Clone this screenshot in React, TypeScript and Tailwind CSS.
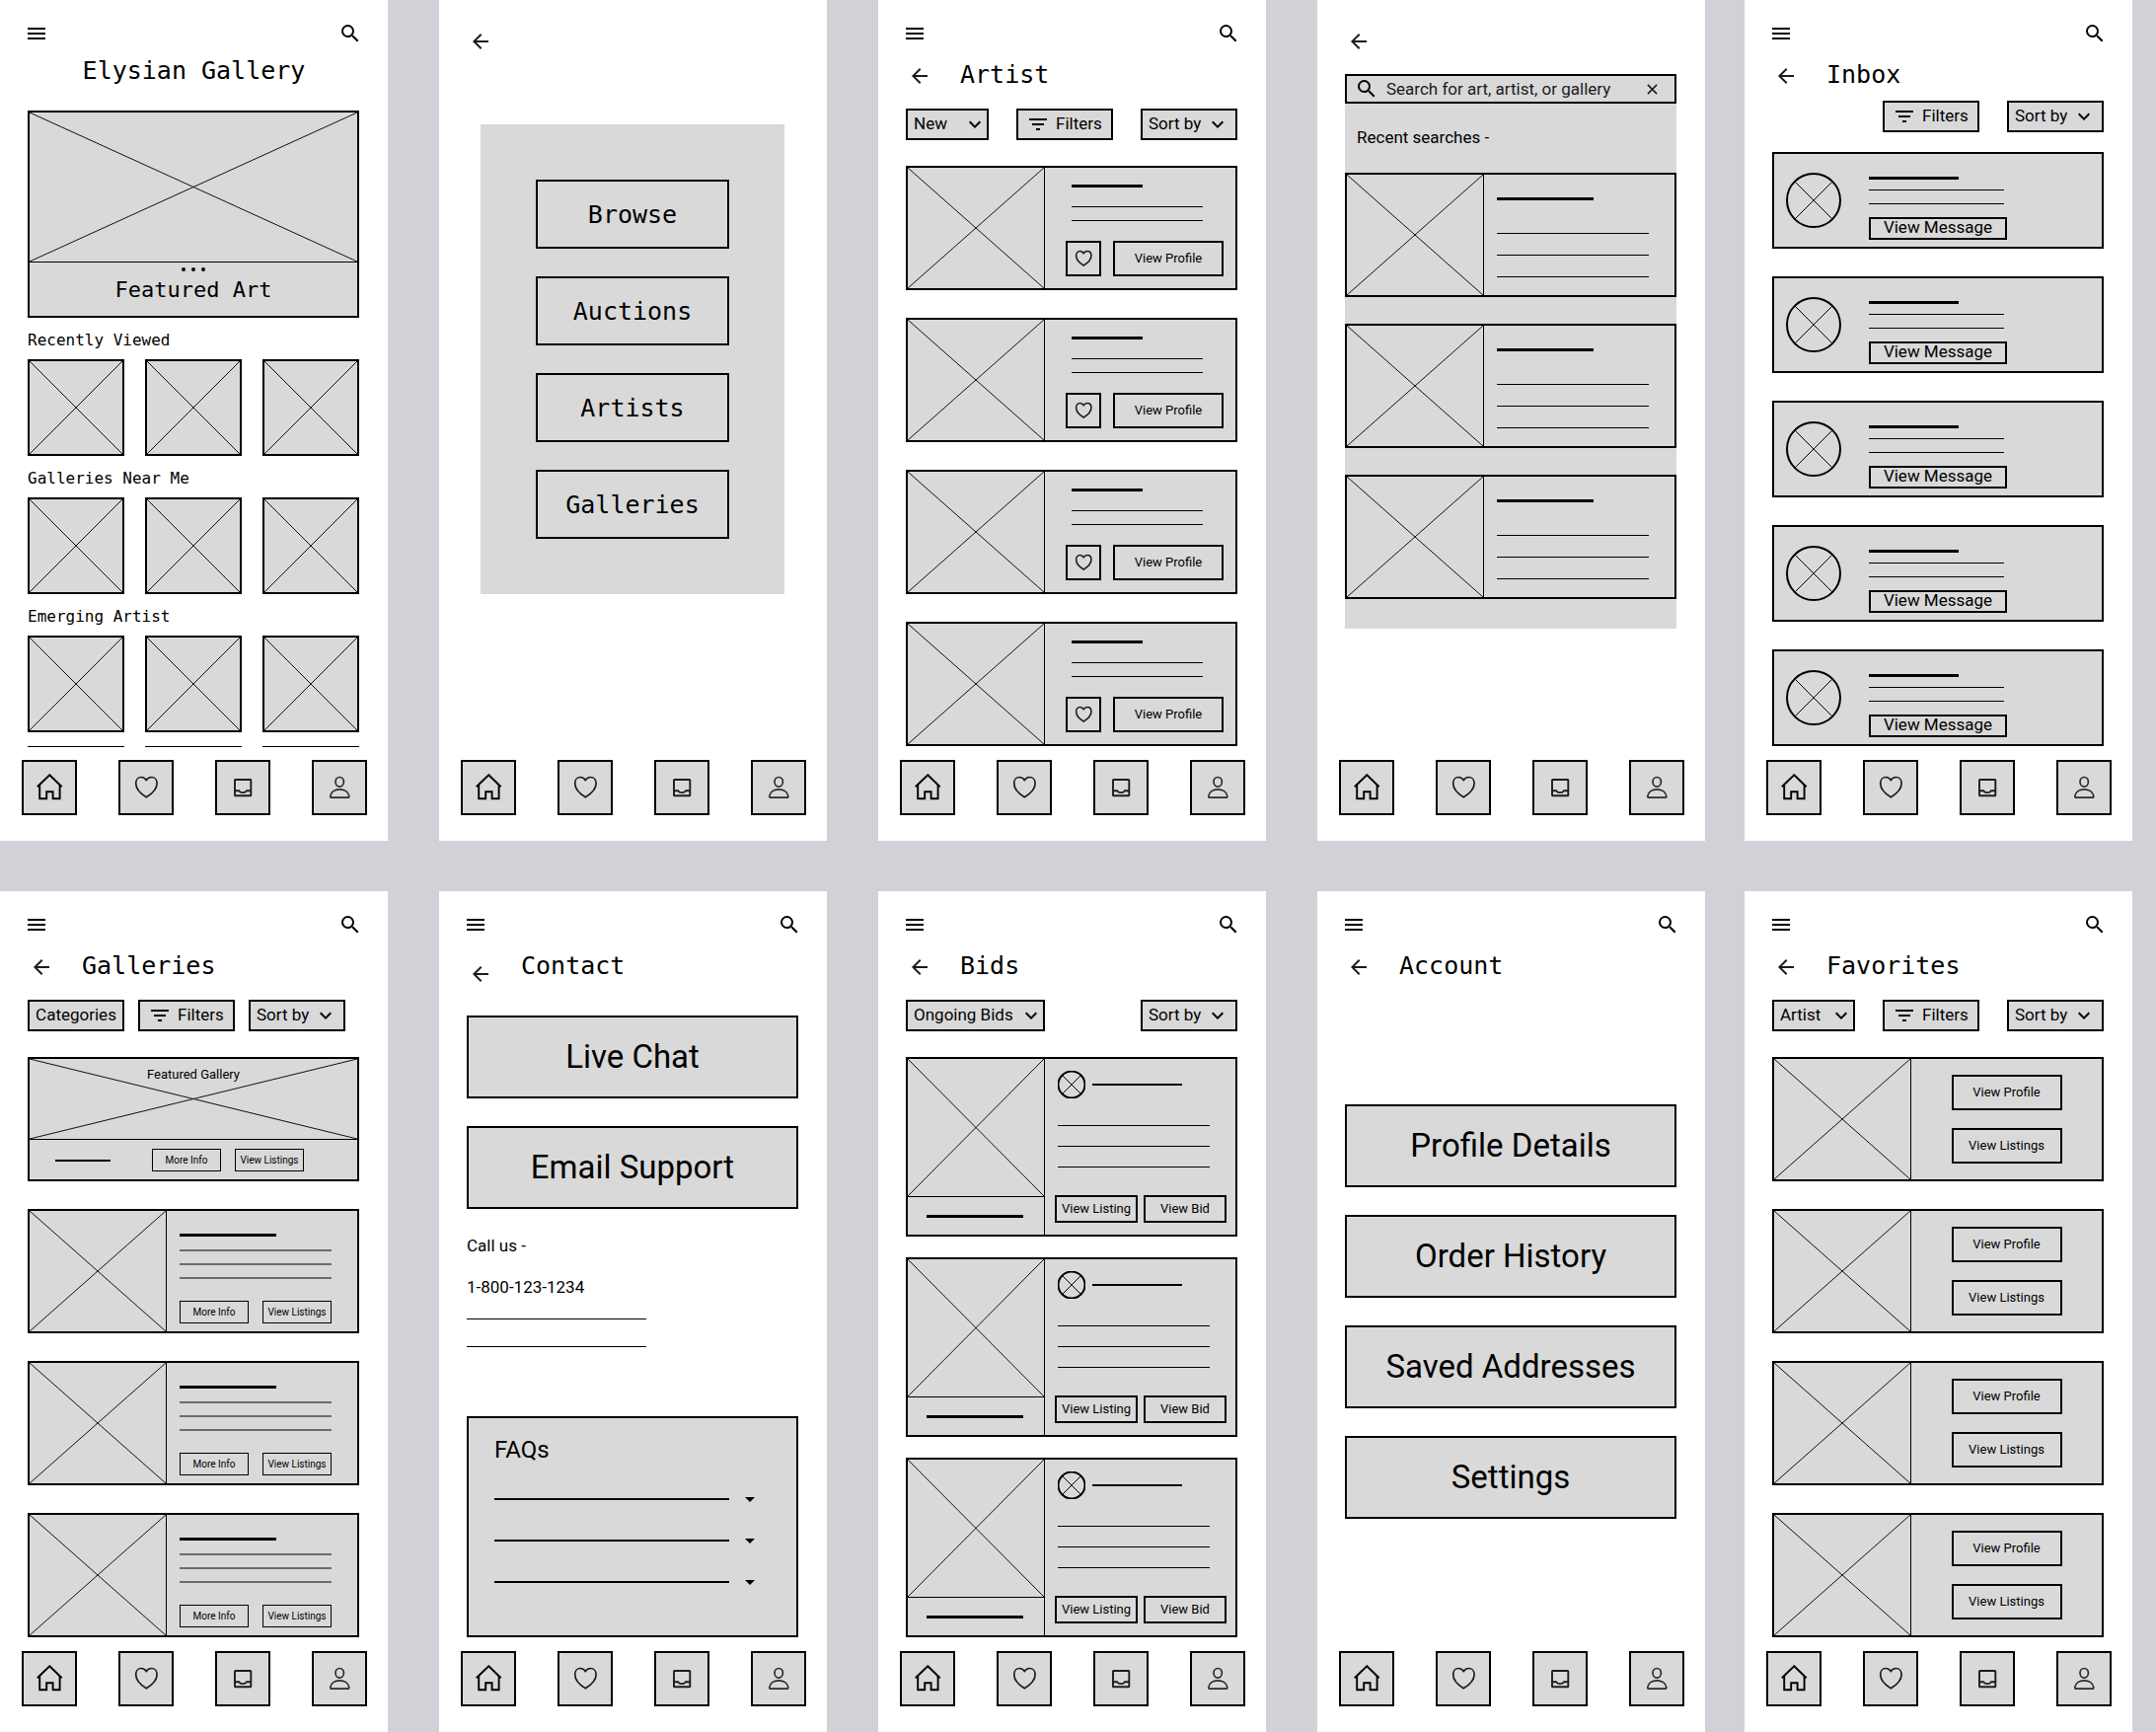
import type { ReactNode } from "react";
import {
  MdArrowBack,
  MdArrowDropDown,
  MdFilterList,
  MdKeyboardArrowDown,
  MdMenu,
  MdSearch,
} from "react-icons/md";

/* ---------- icons ---------- */

function HomeIcon() {
  return (
    <svg viewBox="0 0 28 28" className="size-7" fill="none" stroke="#000" strokeWidth="1.9" aria-hidden="true">
      <path d="M1.8 13.2 14.3 1.2l12.4 12" />
      <path d="M4.2 11v14.2h7v-7h6.4v7h7V11" />
    </svg>
  );
}

function HeartIcon({ className, weight }: { className: string; weight: number }) {
  return (
    <svg viewBox="0 0 28 28" className={className} fill="none" stroke="#1c1b1f" strokeWidth={weight} strokeLinejoin="round" aria-hidden="true">
      <path d="M14.3 23.8C9.5 20.9 3.7 16.2 3.7 9.8c0-3.8 2.3-6.3 5.4-6.3 2.3 0 4.2 1.2 5.2 3.2 1-2 2.9-3.2 5.2-3.2 3.2 0 5.6 2.5 5.6 6.3 0 6.4-6 11.1-10.8 14z" />
    </svg>
  );
}

function InboxIcon() {
  return (
    <svg viewBox="0 0 28 28" className="size-7" fill="none" stroke="#1c1b1f" strokeWidth="1.9" strokeLinejoin="round" aria-hidden="true">
      <rect x="6" y="6" width="16.3" height="16.3" rx="0.6" />
      <path d="M6 17.3h4.3c1.2 2.4 6.3 2.4 7.5 0h4.3" />
    </svg>
  );
}

function PersonIcon() {
  return (
    <svg viewBox="0 0 28 28" className="size-7" fill="none" stroke="#2b2b2b" strokeWidth="1.7" aria-hidden="true">
      <ellipse cx="14.2" cy="8.3" rx="4.2" ry="4.8" />
      <path d="M6.2 24.2c-1 0-1.5-.5-1.4-1.5.6-4.3 4.5-6.8 9.4-6.8s9 2.5 9.6 6.8c.1 1-.4 1.5-1.4 1.5z" />
    </svg>
  );
}

function CloseIcon() {
  return (
    <svg viewBox="0 0 12 12" className="size-[11px]" fill="none" stroke="#1c1b1f" strokeWidth="1.7" aria-hidden="true">
      <path d="m1 1 10 10M11 1 1 11" />
    </svg>
  );
}

/* ---------- wireframe primitives ---------- */

function Cross() {
  return (
    <svg viewBox="0 0 100 100" preserveAspectRatio="none" className="block size-full" stroke="#111" aria-hidden="true">
      <path d="M0 0 100 100M0 100 100 0" vectorEffect="non-scaling-stroke" strokeWidth="1" />
    </svg>
  );
}

function CircleCross({ className }: { className: string }) {
  return (
    <svg viewBox="0 0 56 56" className={className} fill="none" stroke="#000" aria-hidden="true">
      <circle cx="28" cy="28" r="27" strokeWidth="2" vectorEffect="non-scaling-stroke" />
      <path d="m9 9 38 38M47 9 9 47" strokeWidth="1" vectorEffect="non-scaling-stroke" />
    </svg>
  );
}

function Phone({ children, last = false }: { children: ReactNode; last?: boolean }) {
  return (
    <section className={last ? "-ml-3 flex min-w-0 flex-1 flex-col bg-white" : "flex min-w-0 flex-1 flex-col bg-white"}>
      {children}
      <nav className="mt-auto flex justify-between pt-[13px] pr-[21px] pb-[26px] pl-[22px]">
        <NavButton label="Home"><HomeIcon /></NavButton>
        <NavButton label="Favorites"><HeartIcon className="size-7" weight={1.7} /></NavButton>
        <NavButton label="Inbox"><InboxIcon /></NavButton>
        <NavButton label="Account"><PersonIcon /></NavButton>
      </nav>
    </section>
  );
}

function NavButton({ label, children }: { label: string; children: ReactNode }) {
  return (
    <button type="button" aria-label={label} className="flex size-14 items-center justify-center border-2 border-black bg-[#d9d9d9]">
      {children}
    </button>
  );
}

function TopBar() {
  return (
    <header className="flex justify-between pt-[22px] pr-[26px] pl-[25px]">
      <button type="button" aria-label="Menu"><MdMenu className="size-6" /></button>
      <button type="button" aria-label="Search"><MdSearch className="size-6" /></button>
    </header>
  );
}

function BackButton() {
  return (
    <button type="button" aria-label="Back" className="shrink-0 text-[#1c1b1f]">
      <MdArrowBack className="size-6" />
    </button>
  );
}

function TitleRow({ title }: { title: string }) {
  return (
    <div className="mt-[15px] flex h-8 gap-[29px] pl-[30px]">
      <BackButton />
      <h1 className="font-['DejaVu_Sans_Mono',monospace] text-[25px] leading-[30px]">{title}</h1>
    </div>
  );
}

function Body({ children }: { children: ReactNode }) {
  return <div className="pr-[29px] pl-7">{children}</div>;
}

function Dropdown({ label, width, inset = false }: { label: string; width: string; inset?: boolean }) {
  return (
    <div className={`relative h-8 border-2 border-black bg-[#d9d9d9] ${width}`}>
      <select aria-label={label} className="h-7 w-full appearance-none pb-0.5 pl-1.5 text-[17px] leading-6">
        <option>{label}</option>
      </select>
      <MdKeyboardArrowDown
        aria-hidden="true"
        className={inset ? "pointer-events-none absolute top-0.5 right-1.5 size-6" : "pointer-events-none absolute top-0.5 right-0 size-6"}
      />
    </div>
  );
}

function FiltersButton() {
  return (
    <button type="button" className="flex h-8 w-[98px] items-center gap-1.5 border-2 border-black bg-[#d9d9d9] pl-2 text-[17px]">
      <MdFilterList className="size-6 shrink-0" />
      Filters
    </button>
  );
}

function OutlineButton({ children, className }: { children: ReactNode; className: string }) {
  return (
    <button type="button" className={`flex shrink-0 items-center justify-center whitespace-nowrap border-black ${className}`}>
      {children}
    </button>
  );
}

function BigButton({ children }: { children: ReactNode }) {
  return (
    <button type="button" className="h-[84px] w-full border-2 border-black bg-[#d9d9d9] text-[33px]">
      {children}
    </button>
  );
}

function MediaCard({ children }: { children: ReactNode }) {
  return (
    <article className="flex h-[126px] border-2 border-black bg-[#d9d9d9]">
      <div className="w-[139px] shrink-0 border-r border-black"><Cross /></div>
      {children}
    </article>
  );
}

/* ---------- screens ---------- */

function HomeScreen() {
  return (
    <Phone>
      <TopBar />
      <h1 className="mt-[10px] text-center font-['DejaVu_Sans_Mono',monospace] text-[25px] leading-8">Elysian Gallery</h1>
      <div className="mt-6 pr-[29px] pl-7">
        <article className="flex h-[210px] flex-col border-2 border-black bg-[#d9d9d9]">
          <div className="h-[152px] border-b border-black"><Cross /></div>
          <div className="mt-[5px] flex justify-center gap-1.5">
            <span className="size-1 rounded-full bg-black" />
            <span className="size-1 rounded-full bg-black" />
            <span className="size-1 rounded-full bg-black" />
          </div>
          <h2 className="mt-[5px] text-center font-['DejaVu_Sans_Mono',monospace] text-[22px] leading-7">Featured Art</h2>
        </article>
        {["Recently Viewed", "Galleries Near Me", "Emerging Artist"].map((name) => (
          <section key={name} className="mt-[11px]">
            <h2 className="mb-[7px] font-['DejaVu_Sans_Mono',monospace] text-base leading-6">{name}</h2>
            <div className="grid grid-cols-3 gap-[21px]">
              {[0, 1, 2].map((i) => (
                <div key={i} className="aspect-square border-2 border-black bg-[#d9d9d9]"><Cross /></div>
              ))}
            </div>
          </section>
        ))}
        <div className="mt-[14px] grid grid-cols-3 gap-[21px]">
          {[0, 1, 2].map((i) => (
            <div key={i} className="h-px bg-black" />
          ))}
        </div>
      </div>
    </Phone>
  );
}

function MenuScreen() {
  return (
    <Phone>
      <div className="h-[54px] pt-[30px] pl-[30px]"><BackButton /></div>
      <div className="mt-[72px] mr-[43px] ml-[42px] flex flex-col gap-7 bg-[#d9d9d9] p-14">
        {["Browse", "Auctions", "Artists", "Galleries"].map((name) => (
          <button key={name} type="button" className="h-[70px] border-2 border-black pt-0.5 font-['DejaVu_Sans_Mono',monospace] text-[25px]">
            {name}
          </button>
        ))}
      </div>
    </Phone>
  );
}

function ArtistScreen() {
  return (
    <Phone>
      <TopBar />
      <TitleRow title="Artist" />
      <Body>
        <div className="mt-[17px] flex justify-between">
          <Dropdown label="New" width="w-[84px]" />
          <FiltersButton />
          <Dropdown label="Sort by" width="w-[98px]" inset />
        </div>
        <div className="mt-[26px] flex flex-col gap-7">
          {[0, 1, 2, 3].map((i) => (
            <MediaCard key={i}>
              <div className="pt-[17px] pl-[21px]">
                <div className="ml-1.5 h-[3px] w-[72px] bg-black" />
                <div className="mt-[19px] ml-1.5 h-px w-[133px] bg-black" />
                <div className="mt-[13px] ml-1.5 h-px w-[133px] bg-black" />
                <div className="mt-5 flex gap-3">
                  <button type="button" aria-label="Add to favorites" className="flex size-9 items-center justify-center border-2 border-black">
                    <HeartIcon className="size-5" weight={2.2} />
                  </button>
                  <OutlineButton className="h-9 w-[112px] border-2 text-[13px]">View Profile</OutlineButton>
                </div>
              </div>
            </MediaCard>
          ))}
        </div>
      </Body>
    </Phone>
  );
}

function SearchScreen() {
  return (
    <Phone>
      <div className="h-[54px] pt-[30px] pl-[30px]"><BackButton /></div>
      <div className="mt-[21px] mr-[29px] ml-7 bg-[#d9d9d9] pb-[30px]">
        <div className="flex h-[30px] items-center border-2 border-black pl-2">
          <MdSearch className="size-6 shrink-0" aria-hidden="true" />
          <input
            type="text"
            aria-label="Search"
            placeholder="Search for art, artist, or gallery"
            className="ml-2 w-full min-w-0 flex-1 bg-transparent text-[17px] leading-6 placeholder:text-[#1c1b1f]"
          />
          <button type="button" aria-label="Clear search" className="mr-[17px] shrink-0"><CloseIcon /></button>
        </div>
        <h2 className="mt-[22px] ml-3 text-[17px] leading-6">Recent searches -</h2>
        <div className="mt-6 flex flex-col gap-[27px]">
          {[0, 1, 2].map((i) => (
            <MediaCard key={i}>
              <div className="pt-[23px] pl-[13px]">
                <div className="h-[3px] w-[98px] bg-black" />
                <div className="mt-[33px] h-px w-[154px] bg-black" />
                <div className="mt-[21px] h-px w-[154px] bg-black" />
                <div className="mt-[21px] h-px w-[154px] bg-black" />
              </div>
            </MediaCard>
          ))}
        </div>
      </div>
    </Phone>
  );
}

function InboxScreen() {
  return (
    <Phone last>
      <TopBar />
      <TitleRow title="Inbox" />
      <Body>
        <div className="mt-[9px] flex justify-end gap-7">
          <FiltersButton />
          <Dropdown label="Sort by" width="w-[98px]" inset />
        </div>
        <div className="mt-5 flex flex-col gap-7">
          {[0, 1, 2, 3, 4].map((i) => (
            <article key={i} className="flex h-[98px] border-2 border-black bg-[#d9d9d9] pl-3">
              <CircleCross className="size-14 shrink-0 self-center" />
              <div className="pt-[23px] pl-7">
                <div className="h-[3px] w-[91px] bg-black" />
                <div className="mt-[10px] h-px w-[137px] bg-black" />
                <div className="mt-[13px] h-px w-[137px] bg-black" />
                <OutlineButton className="mt-[13px] h-[23px] w-[140px] border-2 pb-0.5 text-[17px]">View Message</OutlineButton>
              </div>
            </article>
          ))}
        </div>
      </Body>
    </Phone>
  );
}

function GalleryActions() {
  return (
    <div className="flex gap-[14px]">
      <OutlineButton className="h-[23px] w-[70px] border text-[10px]">More Info</OutlineButton>
      <OutlineButton className="h-[23px] w-[70px] border text-[10px]">View Listings</OutlineButton>
    </div>
  );
}

function GalleriesScreen() {
  return (
    <Phone>
      <TopBar />
      <TitleRow title="Galleries" />
      <Body>
        <div className="mt-[17px] flex gap-[14px]">
          <OutlineButton className="h-8 w-[98px] border-2 bg-[#d9d9d9] text-[17px]">Categories</OutlineButton>
          <FiltersButton />
          <Dropdown label="Sort by" width="w-[98px]" inset />
        </div>
        <div className="mt-[26px] flex flex-col gap-7">
          <article className="h-[126px] border-2 border-black bg-[#d9d9d9]">
            <div className="relative h-[82px] border-b border-black">
              <Cross />
              <h2 className="absolute inset-x-0 top-2 text-center text-[13px] leading-4">Featured Gallery</h2>
            </div>
            <div className="mt-[9px] flex items-center gap-[42px] pl-[26px]">
              <div className="h-0.5 w-14 bg-black" />
              <GalleryActions />
            </div>
          </article>
          {[0, 1, 2].map((i) => (
            <MediaCard key={i}>
              <div className="pt-[23px] pl-[13px]">
                <div className="h-[3px] w-[98px] bg-black" />
                <div className="mt-[13px] h-0.5 w-[154px] bg-[#6c6c6c]" />
                <div className="mt-3 h-0.5 w-[154px] bg-[#6c6c6c]" />
                <div className="mt-3 mb-[22px] h-0.5 w-[154px] bg-[#6c6c6c]" />
                <GalleryActions />
              </div>
            </MediaCard>
          ))}
        </div>
      </Body>
    </Phone>
  );
}

function ContactScreen() {
  return (
    <Phone>
      <TopBar />
      <div className="mt-[15px] flex h-[35px] items-end gap-[29px] pl-[30px]">
        <BackButton />
        <h1 className="self-start font-['DejaVu_Sans_Mono',monospace] text-[25px] leading-[30px]">Contact</h1>
      </div>
      <Body>
        <div className="mt-[30px] flex flex-col gap-7">
          <BigButton>Live Chat</BigButton>
          <BigButton>Email Support</BigButton>
        </div>
        <p className="mt-[25px] text-[17px] leading-6">Call us -</p>
        <p className="mt-[18px] text-[17px] leading-6">1-800-123-1234</p>
        <div className="mt-5 h-px w-[182px] bg-black" />
        <div className="mt-[27px] h-px w-[182px] bg-black" />
        <section className="mt-[70px] border-2 border-black bg-[#d9d9d9] px-[26px] pt-4 pb-[42px]">
          <h2 className="text-2xl leading-8">FAQs</h2>
          <div className="mt-[22px] flex flex-col gap-[18px]">
            {[0, 1, 2].map((i) => (
              <button key={i} type="button" aria-label={`Question ${i + 1}`} className="flex h-6 items-center gap-[9px]">
                <span className="h-0.5 w-[238px] bg-black" />
                <MdArrowDropDown className="size-6" />
              </button>
            ))}
          </div>
        </section>
      </Body>
    </Phone>
  );
}

function BidsScreen() {
  return (
    <Phone>
      <TopBar />
      <TitleRow title="Bids" />
      <Body>
        <div className="mt-[17px] flex justify-between">
          <Dropdown label="Ongoing Bids" width="w-[141px]" />
          <Dropdown label="Sort by" width="w-[98px]" inset />
        </div>
        <div className="mt-[26px] flex flex-col gap-[21px]">
          {[0, 1, 2].map((i) => (
            <article key={i} className="flex h-[182px] border-2 border-black bg-[#d9d9d9]">
              <div className="w-[139px] shrink-0 border-r border-black">
                <div className="h-[140px] border-b border-black"><Cross /></div>
                <div className="mt-[18px] ml-[19px] h-[3px] w-[98px] bg-black" />
              </div>
              <div className="pt-3 pl-[10px]">
                <div className="flex items-center gap-[7px] pl-[3px]">
                  <CircleCross className="size-7 shrink-0" />
                  <div className="h-0.5 w-[91px] bg-black" />
                </div>
                <div className="mt-[27px] ml-[3px] h-px w-[154px] bg-black" />
                <div className="mt-5 ml-[3px] h-px w-[154px] bg-black" />
                <div className="mt-5 ml-[3px] h-px w-[154px] bg-black" />
                <div className="mt-7 flex gap-1.5">
                  <OutlineButton className="h-7 w-[84px] border-2 text-[13px]">View Listing</OutlineButton>
                  <OutlineButton className="h-7 w-[84px] border-2 text-[13px]">View Bid</OutlineButton>
                </div>
              </div>
            </article>
          ))}
        </div>
      </Body>
    </Phone>
  );
}

function AccountScreen() {
  return (
    <Phone>
      <TopBar />
      <TitleRow title="Account" />
      <Body>
        <div className="mt-[123px] flex flex-col gap-7">
          <BigButton>Profile Details</BigButton>
          <BigButton>Order History</BigButton>
          <BigButton>Saved Addresses</BigButton>
          <BigButton>Settings</BigButton>
        </div>
      </Body>
    </Phone>
  );
}

function FavoritesScreen() {
  return (
    <Phone last>
      <TopBar />
      <TitleRow title="Favorites" />
      <Body>
        <div className="mt-[17px] flex justify-between">
          <Dropdown label="Artist" width="w-[84px]" />
          <FiltersButton />
          <Dropdown label="Sort by" width="w-[98px]" inset />
        </div>
        <div className="mt-[26px] flex flex-col gap-7">
          {[0, 1, 2, 3].map((i) => (
            <MediaCard key={i}>
              <div className="flex flex-1 flex-col items-center justify-center gap-[18px]">
                <OutlineButton className="h-9 w-[112px] border-2 text-[13px]">View Profile</OutlineButton>
                <OutlineButton className="h-9 w-[112px] border-2 text-[13px]">View Listings</OutlineButton>
              </div>
            </MediaCard>
          ))}
        </div>
      </Body>
    </Phone>
  );
}

export default function App() {
  return (
    <main className="flex min-h-screen flex-col gap-[51px] bg-[#d1d2d8] pr-6 font-[Roboto,sans-serif] text-black">
      <div className="flex gap-[52px]">
        <HomeScreen />
        <MenuScreen />
        <ArtistScreen />
        <SearchScreen />
        <InboxScreen />
      </div>
      <div className="flex grow gap-[52px]">
        <GalleriesScreen />
        <ContactScreen />
        <BidsScreen />
        <AccountScreen />
        <FavoritesScreen />
      </div>
    </main>
  );
}
